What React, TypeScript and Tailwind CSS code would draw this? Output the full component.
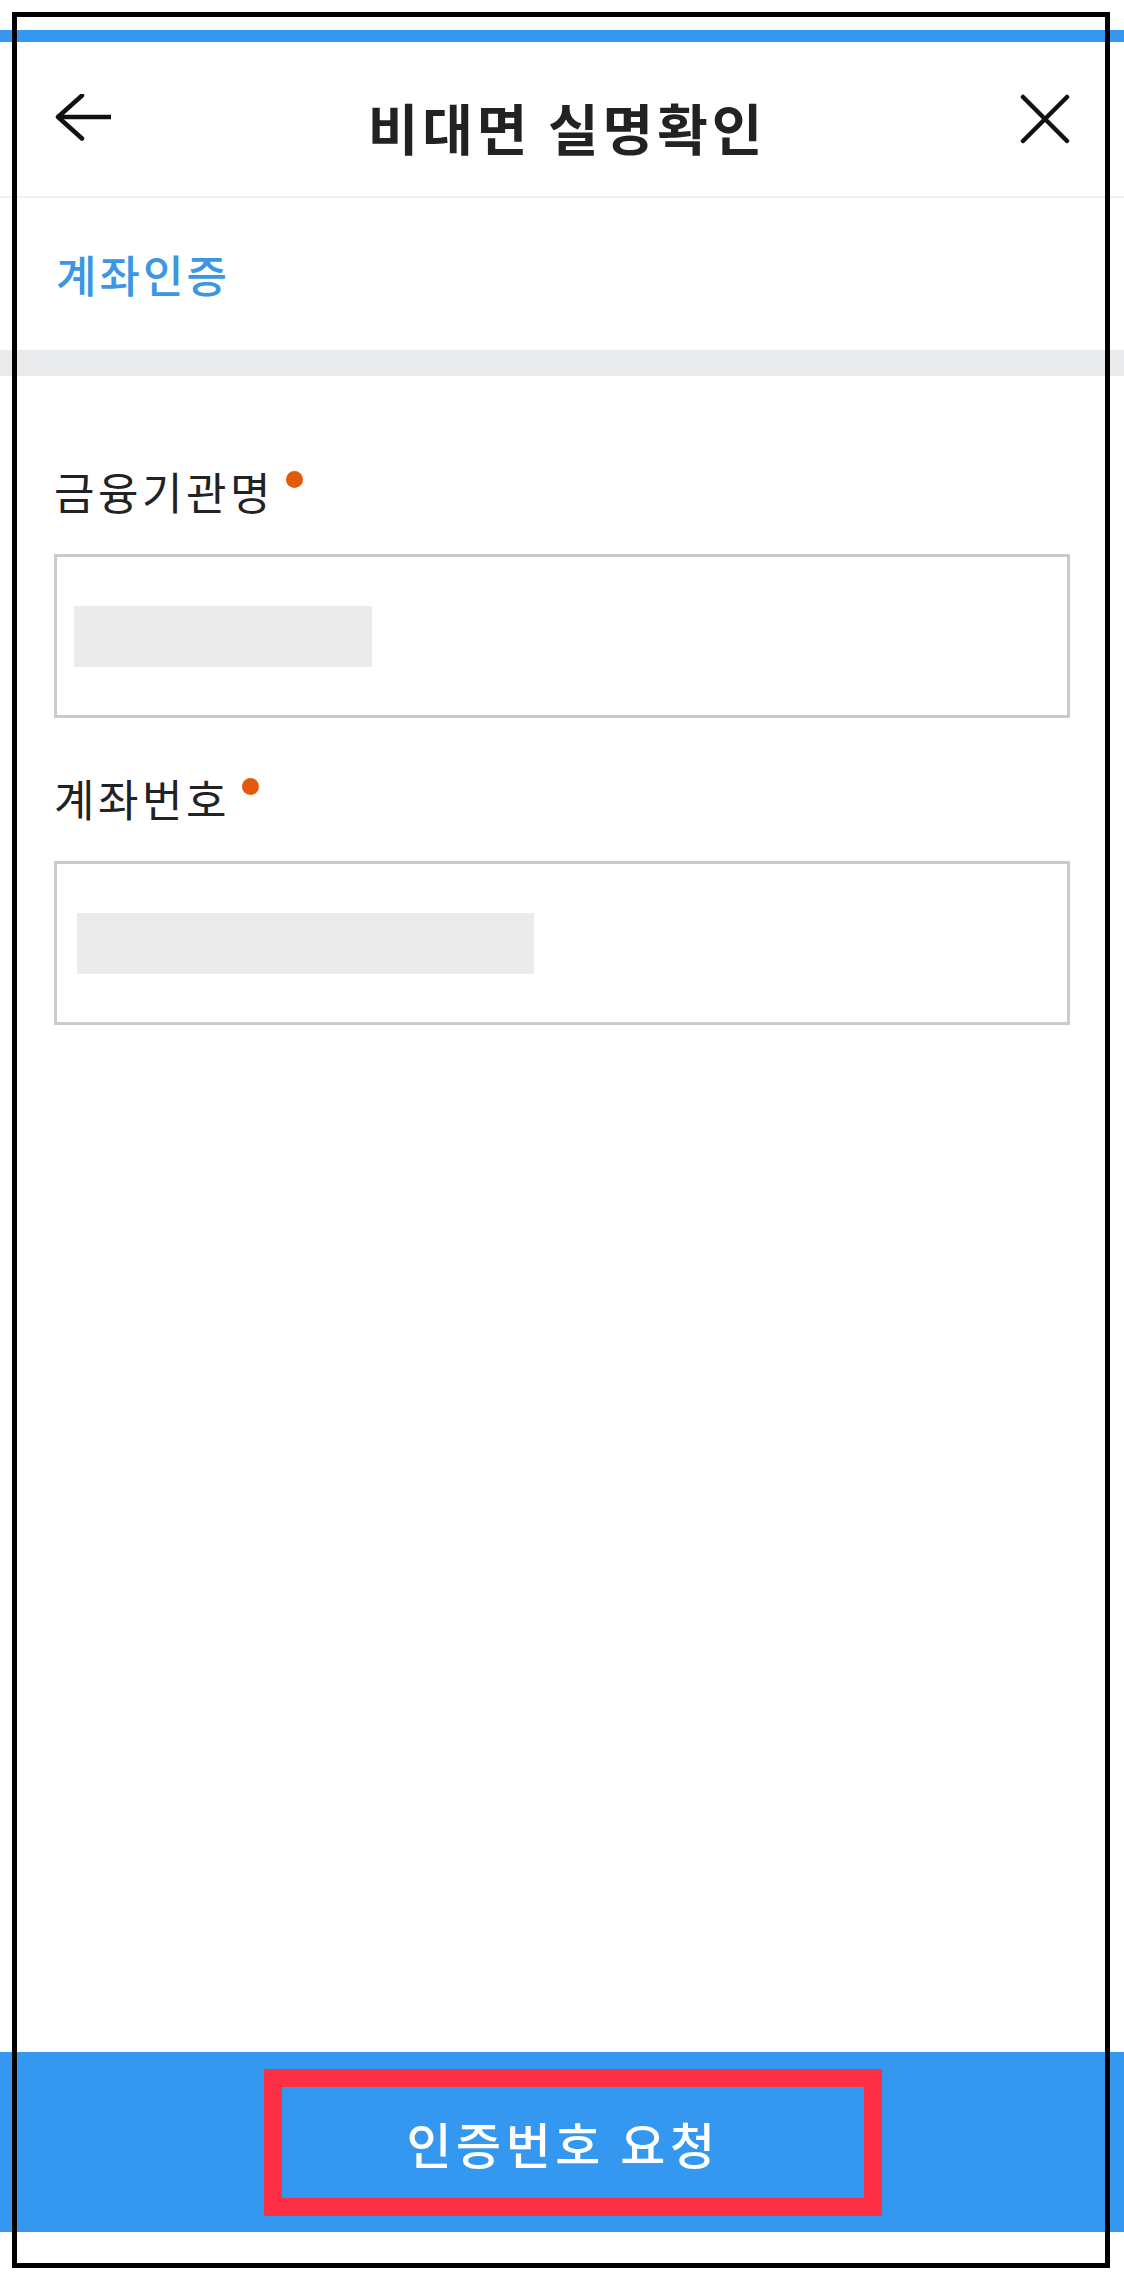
import React from 'react';

const font = { fontFamily: '"Noto Sans CJK KR", "Noto Sans", sans-serif' };

const BackIcon = () => (
  <svg width="60" height="50" viewBox="0 0 60 50" fill="none">
    <path d="M57 23H4" stroke="#111" strokeWidth="4.5" />
    <path d="M28 1.5L4 23L28 44.5" stroke="#111" strokeWidth="4.5" strokeLinecap="round" strokeLinejoin="round" />
  </svg>
);

const CloseIcon = () => (
  <svg width="50" height="50" viewBox="0 0 50 50" fill="none">
    <path d="M3 3L47 47M47 3L3 47" stroke="#111" strokeWidth="4.5" strokeLinecap="round" />
  </svg>
);

const Field = ({ label, barWidth, barLeft }: { label: string; barWidth: string; barLeft: string }) => (
  <div className="flex flex-col">
    <div className="flex items-start h-[60px]">
      <span className="text-[44px] leading-[60px] tracking-[3.5px] text-[#222]">{label}</span>
      <span className="ml-[12px] mt-[10px] w-[17px] h-[17px] rounded-full bg-[#e35a0e]" />
    </div>
    <div className="mt-[33px] h-[164px] border-[3px] border-[#cbcbcb] bg-white flex items-center">
      <div className={`${barLeft} ${barWidth} h-[61px] bg-[#ebebeb]`} />
    </div>
  </div>
);

export default function App() {
  return (
    <div className="relative w-[1124px] h-[2280px] bg-white flex flex-col overflow-hidden" style={font}>
      <div className="h-[30px] shrink-0" />
      <div className="h-[12px] shrink-0 bg-[#3498f0]" />

      {/* header */}
      <div className="h-[156px] shrink-0 flex items-center justify-between px-[54px] border-b-2 border-[#efefef]">
        <BackIcon />
        <span className="pt-[14px] text-[55px] leading-none font-bold tracking-[4px] text-[#222]">비대면 실명확인</span>
        <CloseIcon />
      </div>

      <div className="h-[152px] shrink-0 flex items-center px-[56px]">
        <span className="text-[44px] leading-none font-medium tracking-[3px] text-[#3b97e6]">계좌인증</span>
      </div>
      <div className="h-[26px] shrink-0 bg-[#e9eaec]" />

      {/* form */}
      <div className="px-[54px] pt-[85px] flex flex-col gap-[50px]">
        <Field label="금융기관명" barLeft="ml-[17px]" barWidth="w-[298px]" />
        <Field label="계좌번호" barLeft="ml-[20px]" barWidth="w-[457px]" />
      </div>

      <div className="flex-1" />

      {/* bottom button */}
      <div className="h-[180px] shrink-0 bg-[#3498f0] flex items-center justify-center">
        <button className="ml-[22px] w-[618px] h-[147px] pr-[20px] border-[18px] border-[#ff2f46] bg-[#3498f0] text-white text-[49px] font-medium leading-none tracking-[4.5px]">
          인증번호 요청
        </button>
      </div>
      <div className="h-[48px] shrink-0" />

      {/* outer frame */}
      <div className="absolute left-[12px] top-[12px] w-[1098px] h-[2256px] border-[5px] border-black pointer-events-none" />
    </div>
  );
}
